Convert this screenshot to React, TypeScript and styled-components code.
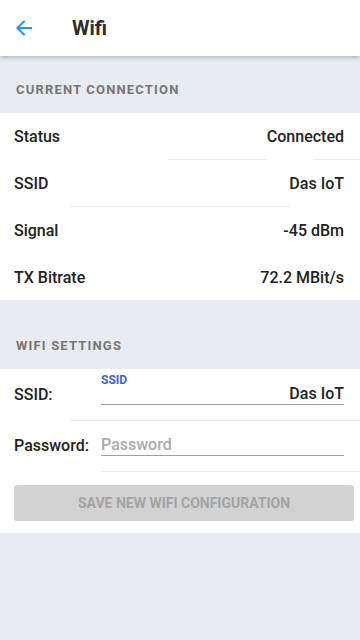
import React from "react";
import styled, { createGlobalStyle } from "styled-components";

const Global = createGlobalStyle`
  html, body { margin: 0; padding: 0; }
  body {
    background: #e9ecef;
    font-family: Roboto, "Liberation Sans", Arial, sans-serif;
    color: #212121;
    min-height: 640px;
  }
  * { box-sizing: border-box; }
`;

const Page = styled.div`
  display: flex;
  flex-direction: column;
  min-height: 640px;
  background: #e9ecef;
`;

const Header = styled.header`
  height: 56px;
  background: #fff;
  display: flex;
  align-items: center;
  padding-left: 12px;
  gap: 36px;
  box-shadow: 0 2px 4px rgba(0, 0, 0, 0.22);
  position: relative;
  z-index: 1;
`;

const BackButton = styled.button`
  border: 0;
  background: transparent;
  padding: 0;
  width: 24px;
  height: 24px;
  display: flex;
  color: #2196f3;
  cursor: pointer;
`;

const Title = styled.h1`
  margin: 0;
  font-size: 20px;
  font-weight: 700;
  color: #2d2d2d;
`;

const SectionTitle = styled.div<{ $top: number }>`
  height: ${(p) => p.$top}px;
  display: flex;
  align-items: flex-end;
  padding: 0 16px 15px;
  font-size: 13px;
  line-height: 16px;
  font-weight: 700;
  letter-spacing: 0.09em;
  color: #757575;
  text-transform: uppercase;
`;

const Card = styled.section`
  background: #fff;
  display: flex;
  flex-direction: column;
`;

const InfoRow = styled.div`
  height: 46px;
  display: flex;
  align-items: center;
  justify-content: space-between;
  padding: 1px 16px 0 14px;
  font-size: 16px;
  font-weight: 500;
  color: #222;
`;

const Divider = styled.div`
  height: 1px;
  position: relative;
`;

const Segment = styled.span<{ $from: number; $to: number }>`
  position: absolute;
  top: 0;
  height: 1px;
  left: ${(p) => p.$from}px;
  width: ${(p) => p.$to - p.$from}px;
  background: #ececec;
`;

const FieldRow = styled.div<{ $padTop: number }>`
  display: grid;
  grid-template-columns: 87px 1fr;
  padding: ${(p) => p.$padTop}px 16px 15px 14px;
`;

const FieldLabel = styled.label`
  align-self: end;
  margin-bottom: 1px;
  font-size: 16px;
  line-height: 18px;
  font-weight: 500;
  color: #222;
`;

const Field = styled.div`
  display: flex;
  flex-direction: column;
`;

const FloatLabel = styled.span`
  font-size: 12px;
  line-height: 12px;
  font-weight: 700;
  color: #3d5cfb;
`;

const Input = styled.input<{ $align?: string }>`
  height: 19px;
  border: 0;
  border-bottom: 1px solid #9e9e9e;
  padding: 0 0 3px;
  margin: 0;
  outline: none;
  background: transparent;
  font-family: Roboto, "Liberation Sans", Arial, sans-serif;
  font-size: 16px;
  font-weight: 500;
  color: #222;
  text-align: ${(p) => p.$align || "left"};
  &::placeholder {
    color: #ababab;
    font-weight: 500;
  }
`;

const ButtonArea = styled.div`
  padding: 13px 6px 12px 14px;
`;

const SaveButton = styled.button`
  width: 100%;
  height: 36px;
  border: 0;
  border-radius: 3px;
  background: #d2d2d2;
  color: #a3a3a3;
  font-family: Roboto, "Liberation Sans", Arial, sans-serif;
  font-size: 14px;
  font-weight: 700;
  text-transform: uppercase;
  cursor: default;
`;

const info: { label: string; value: string; sep: [number, number][] }[] = [
  { label: "Status", value: "Connected", sep: [[168, 267], [313, 360]] },
  { label: "SSID", value: "Das IoT", sep: [[70, 290]] },
  { label: "Signal", value: "-45 dBm", sep: [] },
  { label: "TX Bitrate", value: "72.2 MBit/s", sep: [] },
];

export default function App() {
  return (
    <Page>
      <Global />
      <Header>
        <BackButton aria-label="back">
          <svg width="24" height="24" viewBox="0 0 24 24" fill="currentColor">
            <path d="M20 11H7.83l5.59-5.59L12 4l-8 8 8 8 1.41-1.41L7.83 13H20v-2z" />
          </svg>
        </BackButton>
        <Title>Wifi</Title>
      </Header>

      <SectionTitle $top={57}>Current Connection</SectionTitle>
      <Card>
        {info.map((r, i) => (
          <React.Fragment key={r.label}>
            <InfoRow>
              <span>{r.label}</span>
              <span>{r.value}</span>
            </InfoRow>
            {i < info.length - 1 && (
              <Divider>
                {r.sep.map(([a, b]) => (
                  <Segment key={a} $from={a} $to={b} />
                ))}
              </Divider>
            )}
          </React.Fragment>
        ))}
      </Card>

      <SectionTitle $top={69}>Wifi Settings</SectionTitle>
      <Card>
        <FieldRow $padTop={5}>
          <FieldLabel htmlFor="ssid">SSID:</FieldLabel>
          <Field>
            <FloatLabel>SSID</FloatLabel>
            <Input id="ssid" defaultValue="Das IoT" $align="right" />
          </Field>
        </FieldRow>
        <Divider>
          <Segment $from={70} $to={360} />
        </Divider>
        <FieldRow $padTop={16}>
          <FieldLabel htmlFor="pw">Password:</FieldLabel>
          <Field>
            <Input id="pw" type="password" placeholder="Password" />
          </Field>
        </FieldRow>
        <Divider>
          <Segment $from={101} $to={360} />
        </Divider>
        <ButtonArea>
          <SaveButton disabled>Save new wifi configuration</SaveButton>
        </ButtonArea>
      </Card>
    </Page>
  );
}
